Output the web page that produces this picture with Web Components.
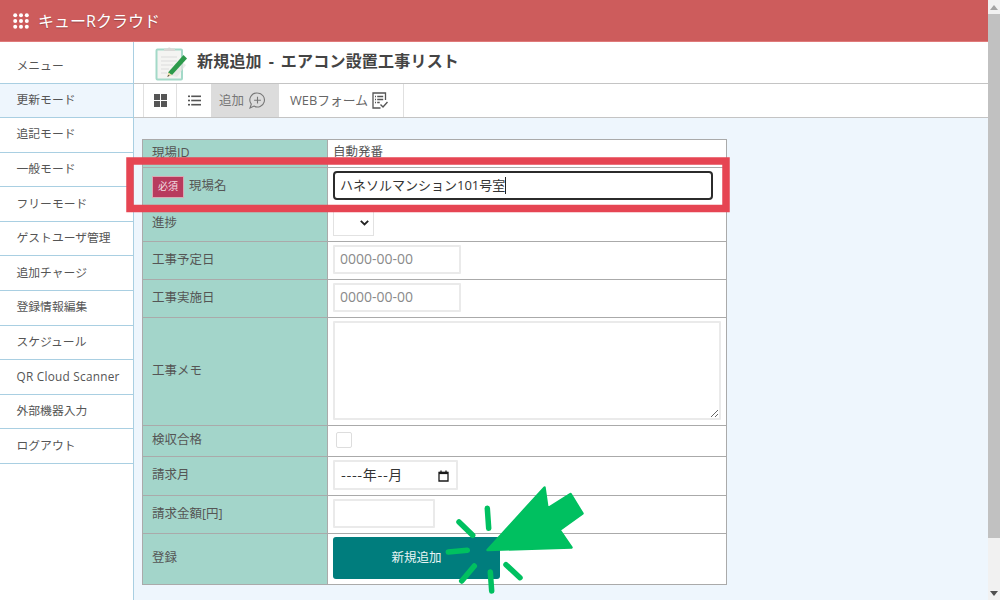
<!DOCTYPE html>
<html lang="ja"><head><meta charset="utf-8"><title>キューRクラウド</title>
<style>
html,body{margin:0;height:100%;overflow:hidden}
body{font:12.5px/19px "Open Sans","Noto Sans CJK JP","Noto Sans",sans-serif;color:#555}
</style></head>
<body>
<app-shell>
  <app-header slot="header">キューRクラウド</app-header>
  <side-nav slot="nav">
    <nav-item first>メニュー</nav-item>
    <nav-item active>更新モード</nav-item>
    <nav-item>追記モード</nav-item>
    <nav-item>一般モード</nav-item>
    <nav-item>フリーモード</nav-item>
    <nav-item>ゲストユーザ管理</nav-item>
    <nav-item>追加チャージ</nav-item>
    <nav-item>登録情報編集</nav-item>
    <nav-item>スケジュール</nav-item>
    <nav-item wide>QR Cloud Scanner</nav-item>
    <nav-item>外部機器入力</nav-item>
    <nav-item>ログアウト</nav-item>
  </side-nav>
  <page-title slot="title">新規追加 - エアコン設置工事リスト</page-title>
  <tab-bar slot="tabs">
    <tab-item icon="grid"></tab-item>
    <tab-item icon="list"></tab-item>
    <tab-item icon="add" active>追加</tab-item>
    <tab-item icon="form">WEBフォーム</tab-item>
  </tab-bar>
  <form-table slot="content">
    <form-row label="現場ID" h="plain">自動発番</form-row>
    <form-row label="現場名" required><text-field w="380" h="29" focus>ハネソルマンション101号室</text-field></form-row>
    <form-row label="進捗"><select-field></select-field></form-row>
    <form-row label="工事予定日"><text-field w="128" h="29" placeholder>0000-00-00</text-field></form-row>
    <form-row label="工事実施日"><text-field w="128" h="29" placeholder>0000-00-00</text-field></form-row>
    <form-row label="工事メモ"><text-field w="388" h="99" area></text-field></form-row>
    <form-row label="検収合格"><check-field></check-field></form-row>
    <form-row label="請求月"><text-field w="125" h="30" month>----年--月</text-field></form-row>
    <form-row label="請求金額[円]"><text-field w="102" h="29"></text-field></form-row>
    <form-row label="登録" last><submit-button>新規追加</submit-button></form-row>
  </form-table>
  <scroll-bar slot="scroll"></scroll-bar>
  <tutorial-marks slot="over"></tutorial-marks>
</app-shell>
<script>
const def=(name,html,init)=>customElements.define(name,class extends HTMLElement{
  constructor(){super();this.attachShadow({mode:'open'}).innerHTML=html;}
  connectedCallback(){init&&init(this,this.shadowRoot);}
});
def('app-shell',`<style>
:host{display:grid;grid-template-columns:988px 12px;width:1000px;height:600px;position:relative;overflow:hidden;background:#fff}
.col{display:flex;flex-direction:column;height:600px}
.body{display:flex;flex:1;min-height:0}
.nav{width:133px;flex:none;border-right:1px solid #a9cfe2}
.main{flex:1;display:flex;flex-direction:column;min-width:0}
.content{flex:1;background:#eef6fd;padding:21px 0 0 8px}
</style>
<div class="col"><slot name="header"></slot>
<div class="body"><div class="nav"><slot name="nav"></slot></div>
<div class="main"><slot name="title"></slot><slot name="tabs"></slot><div class="content"><slot name="content"></slot></div></div></div></div>
<slot name="scroll"></slot><slot name="over"></slot>`);
def('app-header',`<style>
:host{display:flex;align-items:center;gap:9px;height:42px;box-sizing:border-box;padding:1px 0 0 13px;background:#cd5c5c;border-bottom:1px solid #e07a7a;color:#fff;font-size:16px;text-shadow:0 1px 1px rgba(0,0,0,.25)}
svg{display:block}
</style><svg width="16" height="16" viewBox="0 0 16 16" fill="#fff"><circle cx="2.2" cy="2.2" r="2"/><circle cx="8" cy="2.2" r="2"/><circle cx="13.800" cy="2.2" r="2"/><circle cx="2.2" cy="8" r="2"/><circle cx="8" cy="8" r="2"/><circle cx="13.800" cy="8" r="2"/><circle cx="2.2" cy="13.800" r="2"/><circle cx="8" cy="13.800" r="2"/><circle cx="13.800" cy="13.800" r="2"/></svg><slot></slot>`);
def('side-nav',`<style>:host{display:block}</style><slot></slot>`);
def('nav-item',`<style>
:host{display:flex;align-items:center;box-sizing:border-box;height:34.6px;padding:0 0 2px 16.5px;border-bottom:1px solid #a9cfe2;font-size:11.8px;color:#555;white-space:nowrap}
:host([first]){height:41.500px;padding:7px 0 0 16.5px}
:host([active]){background:#eef6fd}
:host([wide]){letter-spacing:.25px}
</style><slot></slot>`);
def('page-title',`<style>
:host{display:flex;align-items:center;gap:7px;height:42px;box-sizing:border-box;padding:0 0 3px 21px;border-bottom:1px solid #c4c4c4;background:#fff;color:#444;font-size:16px;font-weight:700;word-spacing:2.5px;letter-spacing:.2px;white-space:nowrap}
svg{display:block;flex:none;margin-top:4px}
</style><svg width="35" height="35" viewBox="0 0 35 35">
<rect x="1.5" y="3.5" width="25.5" height="30" rx="1" fill="#f4f4f2" stroke="#a3d9c8" stroke-width="2"/>
<path d="M9 5V2.5h3.5a2 2 0 0 1 3.500 0H20V5z" fill="#d8d8d6"/>
<path d="M6 11h16M6 15h16M6 19h12M6 23h8M6 27h6" stroke="#dcdcdc" stroke-width="1.200"/>
<path d="M14 29l13-13 4 3-9 12z" fill="#e2e2e0" opacity=".7"/>
<path d="M13 26.500L28.500 9l3.500 3.500L17 29z" fill="#2c9a4b"/>
<path d="M13 26.500L17 29l-4.500 2z" fill="#ead9a8"/><path d="M12.500 30l1.200-1 .8.800-2 1z" fill="#333"/>
</svg><slot></slot>`);
def('tab-bar',`<style>
:host{display:flex;height:34px;box-sizing:border-box;background:#fff;border-bottom:1px solid #c4c4c4;padding-left:9px}
::slotted(:first-child){border-left:1px solid #e0e0e0}
</style><slot></slot>`);
const icons={
grid:`<svg width="13" height="13" viewBox="0 0 13 13" fill="#555"><rect width="6" height="6"/><rect x="7" width="6" height="6"/><rect y="7" width="6" height="6"/><rect x="7" y="7" width="6" height="6"/></svg>`,
list:`<svg width="13" height="11" viewBox="0 0 13 11" fill="#555"><rect y=".5" width="2" height="1.600"/><rect x="3.200" y=".5" width="9.800" height="1.600"/><rect y="4.700" width="2" height="1.600"/><rect x="3.200" y="4.700" width="9.800" height="1.600"/><rect y="8.900" width="2" height="1.600"/><rect x="3.200" y="8.900" width="9.800" height="1.600"/></svg>`,
add:`<svg width="16" height="17" viewBox="0 0 16 17" fill="none" stroke="#777" stroke-width="1.100"><path d="M8.500 1a7 7 0 1 1-3.500 13.100L1 16l1.300-3.800A7 7 0 0 1 8.500 1z"/><path d="M8.500 4.800v6.800M5.100 8.200h6.800"/></svg>`,
form:`<svg width="16" height="17" viewBox="0 0 16 17" fill="none" stroke="#555" stroke-width="1.300"><path d="M13.500 8V1H1v15h7.500"/><path d="M3 4.500h1M5.200 4.500h6M3 7.500h1M5.200 7.500h6M3 10.500h1M5.200 10.500h2.500"/><path d="M8.500 12.500l2.500 2.500 4.500-5" stroke-width="1.400"/></svg>`};
def('tab-item',`<style>
:host{display:flex;align-items:center;box-sizing:border-box;height:33px;padding:0 10px 1px;border-right:1px solid #e0e0e0;font-size:12.5px;color:#666;white-space:nowrap}
:host([active]){background:#dcdcdc;border-right:0;padding:0 14px 1px 8px;color:#777;gap:5px}
:host([icon="grid"]){padding:0 9px 1px 10px}
:host([icon="list"]){padding:0 10px 1px 11px;border-right:0}
:host([icon="form"]){padding:0 15px 1px 11px;gap:4px;font-size:12.8px}
svg{display:block}
</style><slot></slot><span id="i" style="display:contents"></span>`,(el,s)=>{s.getElementById('i').innerHTML=icons[el.getAttribute('icon')]||''});
def('form-table',`<style>
:host{display:block;width:585px;box-sizing:border-box;border:1px solid #aaa;background:#fff}
</style><slot></slot>`);
def('form-row',`<style>
:host{display:grid;grid-template-columns:185px 1fr;border-bottom:1px solid #aaa;color:#555}
:host([last]){border-bottom:0}
.l{background:#a3d5ca;border-right:1px solid #aaa;display:flex;align-items:center;gap:5px;padding:0 0 3px 9px;box-sizing:border-box}
.v{padding:3px 0 5px 5px;display:flex;align-items:center;min-width:0}
:host([h="plain"]) .v{padding:2px 0 6px 5px;height:19px}
.req{display:none;width:32px;height:22px;margin-top:3px;align-items:center;justify-content:center;background:#b83b5e;border:1px solid #d9a9b4;box-sizing:border-box;color:#f2dbe1;font-size:10px}
:host([required]) .req{display:flex}
</style><div class="l"><span class="req">必須</span><span id="t"></span></div><div class="v"><slot></slot></div>`,(el,s)=>{s.getElementById('t').textContent=el.getAttribute('label')});
def('text-field',`<style>
:host{display:flex;align-items:center;box-sizing:border-box;background:#fff;border:2px solid #eaeaea;padding:0 5px;font-size:14px;color:#333;position:relative;white-space:nowrap;border-radius:1px}
:host([focus]){border:2px solid #2b2b2b;border-radius:4px;color:#333;font-size:13px}
:host([placeholder]){color:#8a8a8a;padding-bottom:2px}
:host([month]){color:#333;font-size:14px;padding:0 0 1px 6px;letter-spacing:.6px;font-family:"Noto Sans CJK JP",sans-serif}
.caret{display:none;width:1px;height:17px;background:#222}
:host([focus]) .caret{display:block}
.cal{display:none;position:absolute;right:7px;top:8px}
:host([month]) .cal{display:block}
.grip{display:none;position:absolute;right:1px;bottom:1px}
:host([area]) .grip{display:block}
</style><slot></slot><span class="caret"></span>
<svg class="cal" width="11" height="12" viewBox="0 0 11 12" fill="none" stroke="#1a1a1a"><path d="M1 2.500h9V11H1z" stroke-width="1.300"/><path d="M1 3h9" stroke-width="2.200"/><path d="M3 .5v2M8 .5v2" stroke-width="1.300"/></svg>
<svg class="grip" width="7" height="7" viewBox="0 0 7 7" stroke="#666"><path d="M0 7L7 0M4 7L7 4"/></svg>`,(el)=>{el.style.width=el.getAttribute('w')+'px';el.style.height=el.getAttribute('h')+'px'});
def('select-field',`<style>
:host{display:flex;align-items:center;justify-content:flex-end;box-sizing:border-box;width:41px;height:27px;background:#fff;border:1px solid #e2e2e2;padding:0 4px 0 0}
svg{display:block}
</style><svg width="9" height="6" viewBox="0 0 9 6" fill="none" stroke="#222" stroke-width="1.800"><path d="M.8.8l3.700 3.700L8.200.8"/></svg>`);
def('check-field',`<style>
:host{display:block;box-sizing:border-box;width:16px;height:16px;margin:3px 0 3px 3px;background:#fff;border:1px solid #ddd;border-radius:2px}
</style>`);
def('submit-button',`<style>
:host{display:block}
button{display:block;width:167px;height:42px;border:0;border-radius:3px;background:#007d7d;color:#e8f4f4;font:12.5px "Open Sans","Noto Sans CJK JP","Noto Sans",sans-serif;padding:0 0 4px;margin:0}
</style><button type="button"><slot></slot></button>`);
def('scroll-bar',`<style>
:host{display:flex;flex-direction:column;width:12px;height:600px;background:#f1f1f1}
.a{height:14px;display:flex;align-items:center;justify-content:center;flex:none}
.t{height:524px;background:#c1c1c1;flex:none}
.s{flex:1}
</style><div class="a"><svg width="8" height="5" viewBox="0 0 8 5" fill="#a3a3a3"><path d="M4 0l4 5H0z"/></svg></div><div class="t"></div><div class="s"></div><div class="a"><svg width="8" height="5" viewBox="0 0 8 5" fill="#505050"><path d="M4 5L0 0h8z"/></svg></div>`);
def('tutorial-marks',`<style>
:host{position:absolute;left:0;top:0;width:1000px;height:600px;pointer-events:none}
svg{display:block}
</style><svg width="1000" height="600" viewBox="0 0 1000 600">
<rect x="130" y="161" width="596" height="47.500" fill="none" stroke="#e64553" stroke-width="7.500"/>
<path d="M487.500 550L544.500 487.500 547.500 508.500 570.500 494 582.500 513.500 559.500 530 571.500 547.500z" fill="#00c060" stroke="#00c060" stroke-width="2.500" stroke-linejoin="round"/>
<g stroke="#00c060" stroke-width="5.500" stroke-linecap="round" fill="none"><path d="M487.300 508.300L488.700 528.300M459 522L472.700 535.300M448.300 552L467.300 550.300M474.300 566L461.700 581M490.300 572L491.700 591M506 564.700L520 577.700"/></g>
</svg>`);
</script>
</body></html>
